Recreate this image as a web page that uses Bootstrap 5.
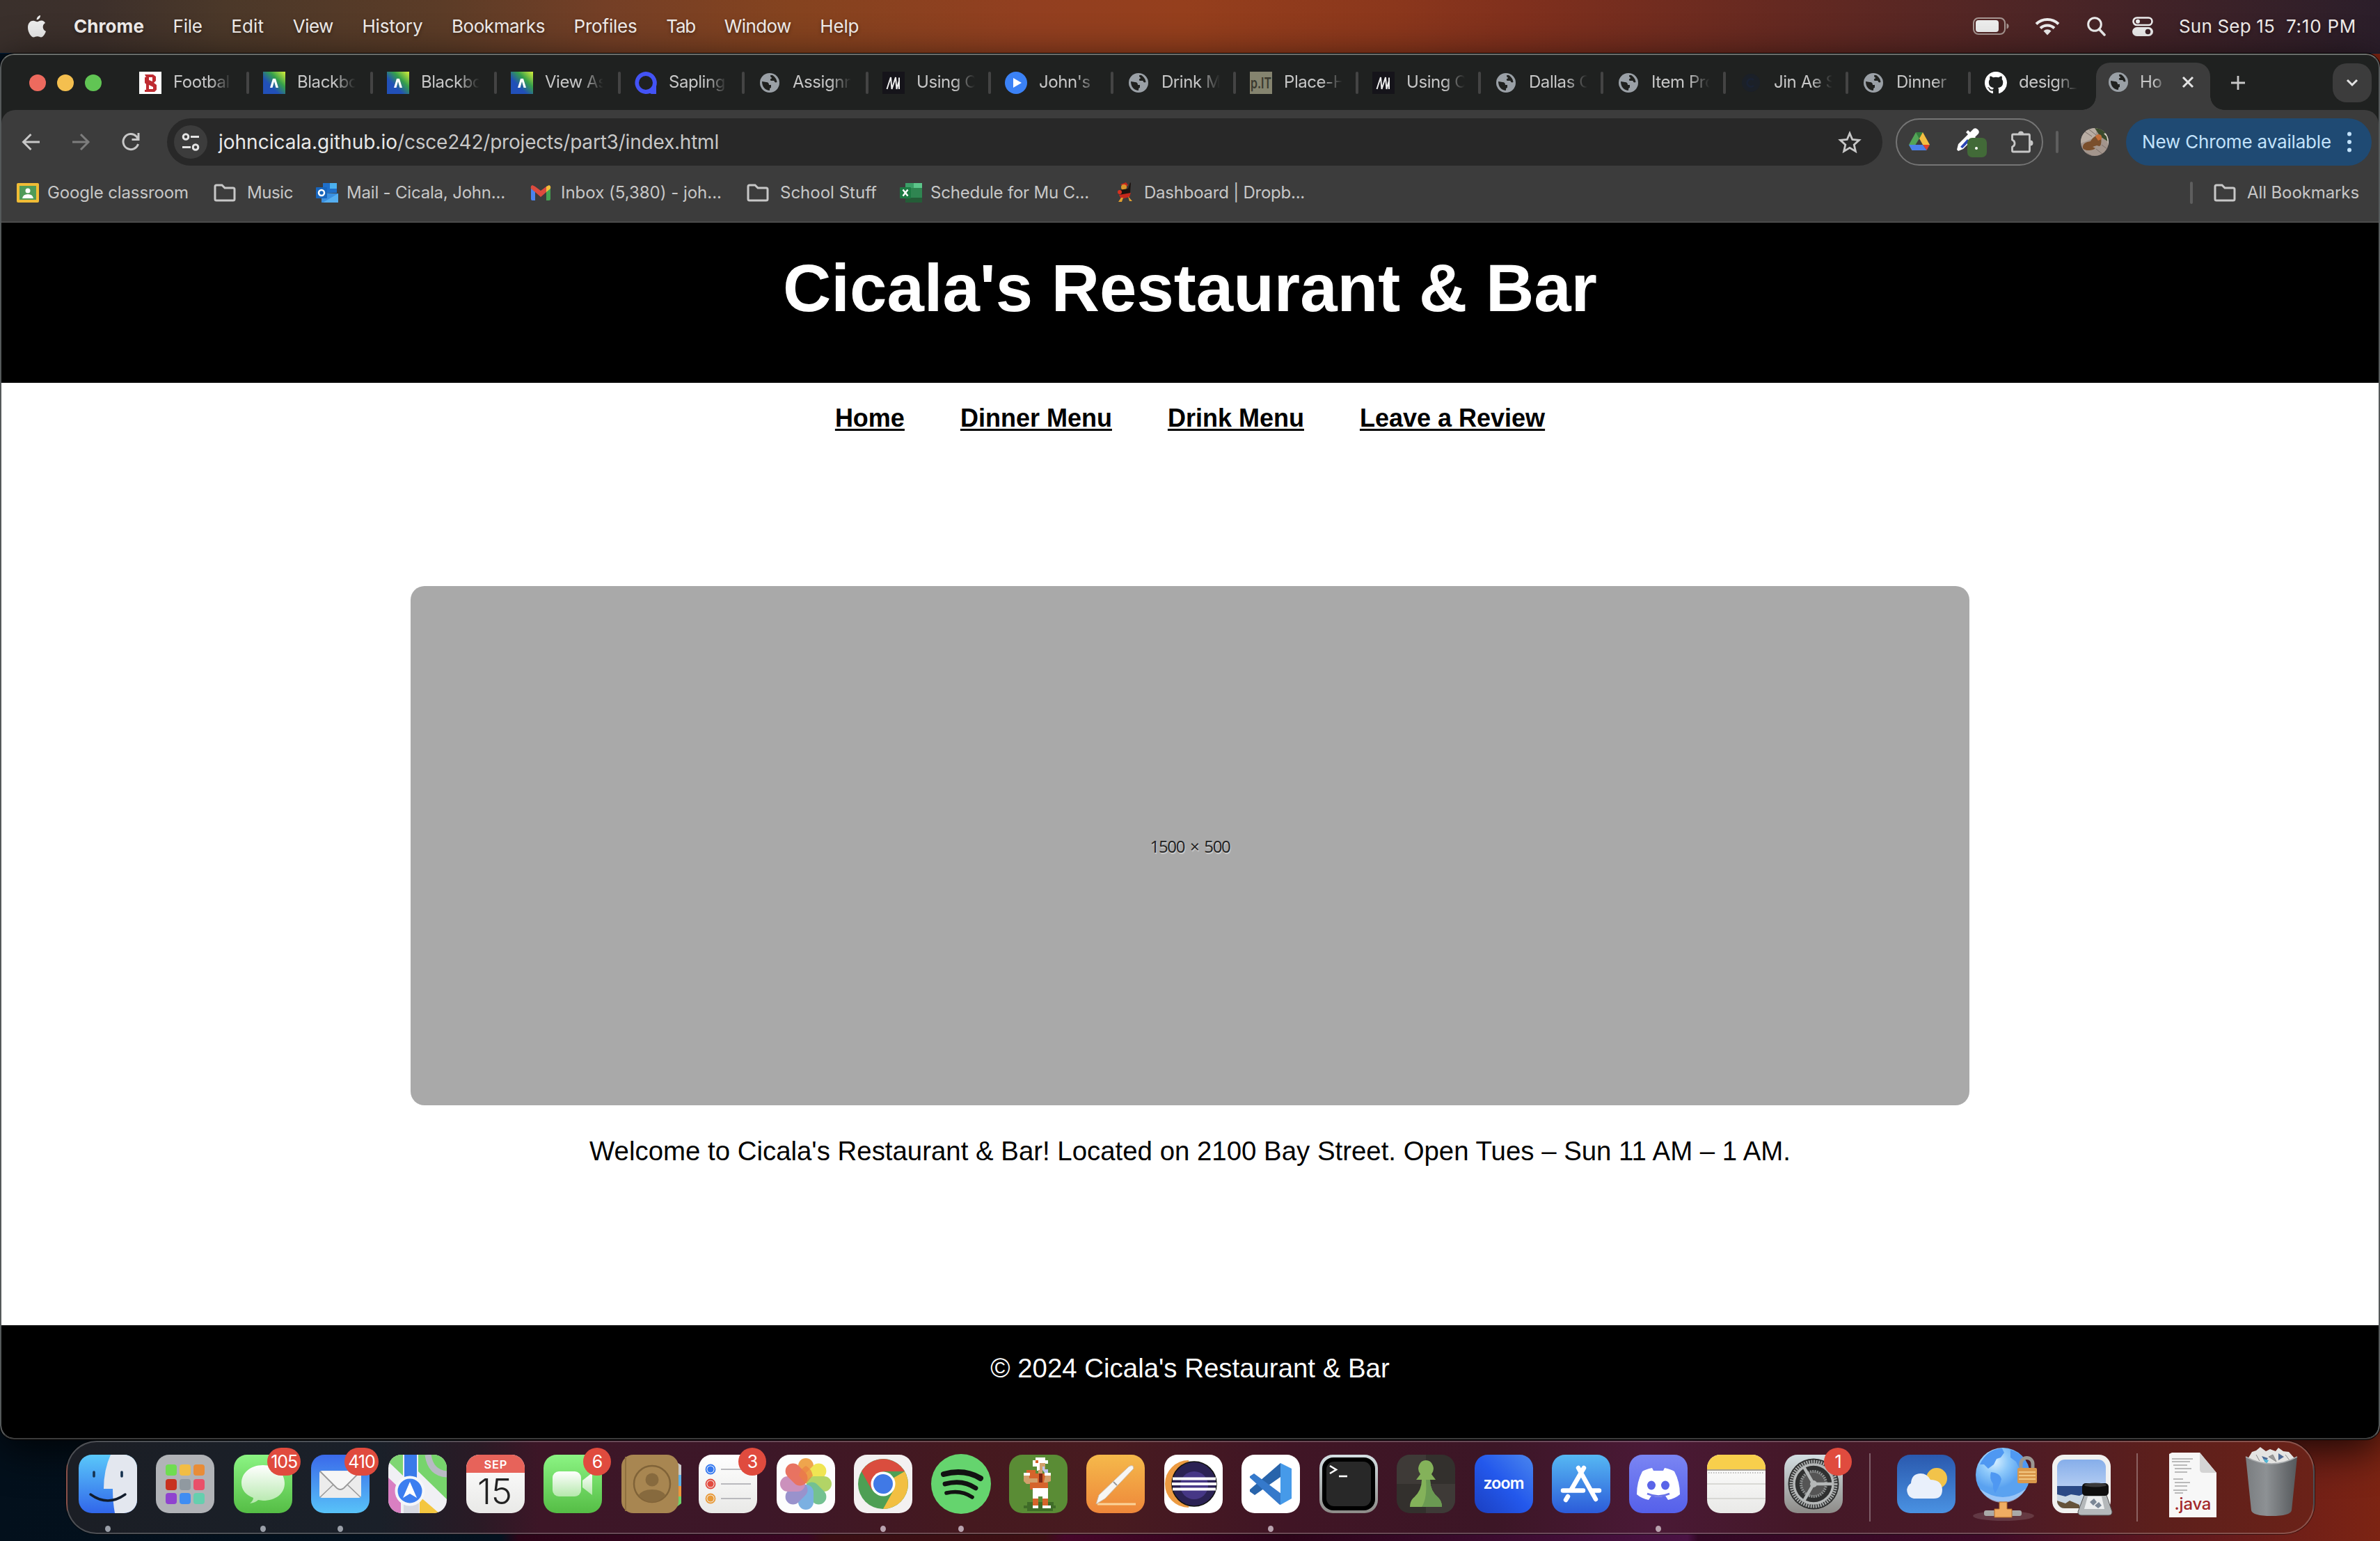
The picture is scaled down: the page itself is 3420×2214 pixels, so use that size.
<!DOCTYPE html>
<html lang="en">
<head>
<meta charset="utf-8">
<title>Home</title>
<link href="https://cdn.jsdelivr.net/npm/bootstrap@5.3.0/dist/css/bootstrap.min.css" rel="stylesheet">
<style>
html,body{height:2214px;width:3420px;overflow:hidden}
body{font-family:Inter,"Liberation Sans",sans-serif;line-height:1;color:#c7c7c7;
 background:linear-gradient(90deg,#03101c 0,#04121f 720px,#2c0418 745px,#3a0724 1160px,#3a0f14 1185px,#3c1014 1500px,#46062a 1530px,#2c0419 1850px,#4a1244 2425px,#330825 2440px,#3d0a28 2850px,#5a1620 3080px,#7c2413 3420px)}
svg{display:block;flex:none}
[data-w]{display:inline-block;white-space:nowrap}
.menubar{height:76px;flex:none;padding:0 34px 1px 40px;background:linear-gradient(90deg,#3a302c 0,#3d302b 140px,#4b3829 320px,#5c3c27 640px,#743f26 870px,#85431f 1140px,#923f20 1480px,#953f1d 1700px,#8b371c 2000px,#80301d 2180px,#652921 2560px,#4c2526 2940px,#2b1e2a 3420px);color:#f2eeec;font-size:26px;text-shadow:0 2px 5px #0006}
.menus{gap:41.6px;margin-left:40px}
.wifi{margin-left:37px}
.lens{margin-left:39px}
.switches{margin-left:38px}
.clock{width:255px;margin-left:37px}
.hairline{height:1px;flex:none;background:linear-gradient(90deg,#03203d 779px,#c07b2b 780px,#b9742b 1100px,#a3441c 1800px,#842c1c 2600px,#0c2038 2900px)}
.win{height:1991px;flex:none;border:2px solid #55595a;border-top-color:#6b6e6b;border-bottom-color:#3b3b3b;border-radius:20px;background:#1f2120;outline:1px solid #000;overflow:hidden;box-shadow:0 14px 60px #000c}
.tabstrip{height:79px;flex:none;font-size:24px;padding-left:40px}
.lightdot{width:24px;height:24px;border-radius:50%}
.tabs{margin-left:34px;height:79px}
.tb{width:176px;padding-left:20px;height:79px;position:relative}
.tb.wd{width:178px}
.tb::after{content:"";position:absolute;right:0;top:24px;width:4px;height:32px;border-radius:2px;background:#444}
.tb.nosep::after{display:none}
.tb svg{width:32px;height:32px}
.tname{width:84px;margin-left:17px;white-space:nowrap;line-height:34px;padding-bottom:1px;letter-spacing:-.45px;-webkit-mask-image:linear-gradient(90deg,#000 54px,#0000 84px);mask-image:linear-gradient(90deg,#000 54px,#0000 84px)}
.tb.active{width:164px;height:68px;margin-top:11px;margin-left:4px;background:#3c3c3c;border-radius:20px 20px 0 0;padding-left:16px;padding-bottom:12px}
.tb.active::after{display:block;background:radial-gradient(circle at 100% 0,#0000 19.5px,#3c3c3c 20px);width:20px;height:20px;right:-20px;top:48px;border-radius:0}
.tb.active::before{content:"";position:absolute;left:-20px;top:48px;width:20px;height:20px;background:radial-gradient(circle at 0 0,#0000 19.5px,#3c3c3c 20px)}
.tb.active .tname{width:36px;margin-left:15px;-webkit-mask-image:linear-gradient(90deg,#000 20px,#0000 38px);mask-image:linear-gradient(90deg,#000 20px,#0000 38px)}
.tb.active .closer{width:18px;height:18px;margin-left:24px}
.plus{margin-left:29px}
.chev{width:56px;height:56px;border-radius:20px;background:#3c3c3c;margin-right:10px}
.toolbar{height:91px;flex:none;background:#3c3c3c;border-radius:20px 20px 0 0;padding:1px 10px 0 28px}
.navgap{margin-left:44px}
.omni{width:2465px;height:68px;border-radius:34px;background:#282828;margin-left:38px;padding:0 30px 0 10px;font-size:28px}
.site{width:48px;height:48px;border-radius:50%;background:#3c3c3c;margin-right:16px}
.host{color:#e8e8e8}
.exts{width:212px;height:68px;border:2px solid #757575;border-radius:34px;margin-left:19px;padding:0 12px 0 17px}
.dropper{margin-left:4px}
.vsep{width:4px;height:32px;border-radius:2px;background:#5e5e5e}
.exts + .vsep{margin:0 32px 0 18px}
.newc{width:353px;height:68px;border-radius:34px;background:#1f4a73;color:#c2e2fb;font-size:26px;padding:0 29px 0 23px;margin-left:25px}
.bmbar{height:71px;flex:none;background:#3c3c3c;border-bottom:2px solid #4b4b4b;padding:0 28px 13px 22px;font-size:24px}
.g12{gap:12px}.g14{gap:14px}.g16{gap:16px}
.m30{margin-left:30px}.m33{margin-left:33px}.m36{margin-left:36px}.m41{margin-left:41px}
.site-page{font-family:Arial,"Liberation Sans",sans-serif;color:#000;min-height:0}
.site-head{height:230px;flex:none}
.site-head h1{font-size:96px;font-weight:700;line-height:112px;margin:0;padding-top:38px}
.site-nav{gap:80px;font-size:36px;font-weight:700;padding-top:30px;line-height:42px;height:292px;flex:none}
.site-nav a{color:#000;text-decoration:underline;text-decoration-thickness:3px;text-underline-offset:3px}
.hero{width:2240px;height:746px;border-radius:20px;background:#a9a9a9;font:24px "Open Sans","Noto Sans",sans-serif;word-spacing:3px;color:#222;text-shadow:1px 2px 1px #cfcfcf;flex:none}
.welcome{font-size:38.4px;line-height:44px;height:316px;padding-top:44px;flex:none}
.site-foot{font-size:38.4px;line-height:44px;padding-top:40px;flex:1 0 160px}
.dock{width:3231px;height:134px;margin:2px 0 0 95px;flex:none;border:2px solid #ffffff38;border-radius:44px;box-shadow:0 0 0 1px #0007;padding-left:2px;
 background:linear-gradient(90deg,#1b1e25 0,#1a2029 450px,#2a1a25 590px,#3d1627 680px,#3d1728 1000px,#45191f 1300px,#481b20 1500px,#401525 1750px,#3c1626 2050px,#4a1936 2270px,#441827 2500px,#4a1a28 2750px,#5c1f1c 3000px,#6b2218 3231px)}
.slot{width:111.45px;height:130px;flex:none;position:relative;padding-top:18px}
.slot svg{width:84px;height:84px;margin:0 auto;overflow:visible}
.slot.run::after{content:"";position:absolute;left:calc(50% - 4px);bottom:1px;width:8px;height:9px;border-radius:50%;background:#b8a2ae}
.slot.cool::after{background:#9a9fa8}
.cnt{position:absolute;right:1px;top:8px;height:40px;min-width:40px;padding:0 5px;border-radius:20px;background:#e04b3e;color:#fff;font-size:25px;line-height:40px;text-align:center;letter-spacing:-1px}
.dsep{width:2px;height:98px;background:#ffffff4d;margin:16px 24px 0;flex:none}
</style>
<script src="https://cdn.jsdelivr.net/npm/bootstrap@5.3.0/dist/js/bootstrap.bundle.min.js"></script>
</head>
<body class="d-flex flex-column m-0">
<svg width="0" height="0" class="position-absolute">
<defs>
<symbol id="globe" viewBox="0 0 32 32"><circle cx="16" cy="16" r="14" fill="#9aa0a6"/><path d="M17 5h3c3 2 6 5 6.500 10-2 1-4 0-4-2h-4c-2 0-2-2-1-3 2 0 2-2 0-2zM5 14l6 1c3 0 4 2 4 4h3v4c-2 0-2 2-2 4C10 27 5 22 5 14z" fill="#20211f"/></symbol>
<symbol id="bb" viewBox="0 0 32 32"><rect width="32" height="32" fill="url(#gbb)"/><path d="M10 23l4-13h4l4 13h-3.500L16 14l-2.500 9z" fill="#fff"/></symbol>
<symbol id="mm" viewBox="0 0 32 32"><rect width="32" height="32" fill="#15141a"/><path d="M6.500 25l5.500-17 1.500 17L19 8l1.500 17L24 13V8.500V25" fill="none" stroke="#eee" stroke-width="2" stroke-linejoin="bevel"/></symbol>
<symbol id="folder" viewBox="0 0 32 28"><path d="M2 5a2 2 0 012-2h8l4 4h12a2 2 0 012 2v14a2 2 0 01-2 2H4a2 2 0 01-2-2z" fill="none" stroke="#c7c7c7" stroke-width="3"/></symbol>
<linearGradient id="gbb" x1="0" y1="1" x2="1" y2="0"><stop offset=".35" stop-color="#2150b8"/><stop offset=".65" stop-color="#36a04a"/><stop offset="1" stop-color="#d8f03a"/></linearGradient>
<linearGradient id="gblue" x2="0" y2="1"><stop stop-color="#5ac8fa"/><stop offset="1" stop-color="#3166ea"/></linearGradient>
<linearGradient id="gmail" x2="0" y2="1"><stop stop-color="#3a69ea"/><stop offset="1" stop-color="#58c3f8"/></linearGradient>
<linearGradient id="ggreen" x2="0" y2="1"><stop stop-color="#8bf483"/><stop offset="1" stop-color="#55bd45"/></linearGradient>
<linearGradient id="gwhite" x2="0" y2="1"><stop stop-color="#fff"/><stop offset="1" stop-color="#e9e9e7"/></linearGradient>
<linearGradient id="gbub" x2="0" y2="1"><stop stop-color="#fff"/><stop offset="1" stop-color="#b5e8ac"/></linearGradient>
<linearGradient id="ggray" x2="0" y2="1"><stop stop-color="#d4dfe3"/><stop offset="1" stop-color="#8d8b88"/></linearGradient>
<linearGradient id="gor" x2="0" y2="1"><stop stop-color="#f5b94b"/><stop offset="1" stop-color="#ee873a"/></linearGradient>
<linearGradient id="gas" x2="0" y2="1"><stop stop-color="#56b8f3"/><stop offset="1" stop-color="#2c5bd9"/></linearGradient>
<linearGradient id="gwx" x2="0" y2="1"><stop stop-color="#2a59ae"/><stop offset="1" stop-color="#4a92e2"/></linearGradient>
<linearGradient id="gdc" x2="0" y2="1"><stop stop-color="#7a85f3"/><stop offset="1" stop-color="#5560ea"/></linearGradient>
<linearGradient id="gsky" x2="0" y2="1"><stop stop-color="#86aeea"/><stop offset="1" stop-color="#b4cdf2"/></linearGradient>
<linearGradient id="gzm" x1="0" y1="1" x2="1" y2="0"><stop stop-color="#1b3fc0"/><stop offset=".5" stop-color="#2358ec"/><stop offset="1" stop-color="#4a86ee"/></linearGradient>
<linearGradient id="gtr"><stop stop-color="#7a7d80"/><stop offset=".4" stop-color="#8d9194"/><stop offset="1" stop-color="#55585b"/></linearGradient>
<radialGradient id="gearth" cx=".35" cy=".25"><stop stop-color="#d8efff"/><stop offset=".5" stop-color="#8cc8fa"/><stop offset="1" stop-color="#5aa2f0"/></radialGradient>
<clipPath id="sq"><rect width="84" height="84" rx="19"/></clipPath>
<clipPath id="pic"><rect x="7" y="7" width="70" height="70" rx="11"/></clipPath>
<clipPath id="av"><circle cx="20" cy="20" r="20"/></clipPath>
</defs>
</svg>

<header class="menubar d-flex align-items-center">
 <svg width="26" height="32" viewBox="0 0 26 32" fill="#ececec"><path d="M18 0c.3 3-2.400 6.500-5.300 6.500C12.300 3.600 15.200.5 18 0zM25 11c-5 3-4 10 1 12-1.500 4-4 8.500-7 8.500-2 0-2.800-1.200-5.300-1.200S10 31.500 8.300 31.500C4.500 31.500 0 24 0 17.500 0 11 4 7.800 7.800 7.800c2.300 0 4 1.500 5.700 1.500 1.600 0 3.300-1.700 6.300-1.700 2 0 4 1.200 5.200 3.400z"/></svg>
 <nav class="menus d-flex align-items-center">
  <b data-w="101">Chrome</b><span data-w="42">File</span><span data-w="47">Edit</span><span data-w="58">View</span><span data-w="87">History</span><span data-w="134">Bookmarks</span><span data-w="91">Profiles</span><span data-w="42">Tab</span><span data-w="96">Window</span><span data-w="56">Help</span>
 </nav>
 <div class="d-flex align-items-center ms-auto">
  <svg width="52" height="26" viewBox="0 0 52 26"><rect x="1" y="1" width="45" height="23" rx="7" fill="none" stroke="#a89793" stroke-width="2"/><rect x="4" y="4" width="33" height="17" rx="4" fill="#eee"/><path d="M48.500 8.500q3 1 3 4t-3 4z" fill="#a89793"/></svg>
  <svg class="wifi" width="36" height="26" viewBox="0 0 36 26" fill="none" stroke="#eee" stroke-width="4"><path d="M2 9.500a23 23 0 0132 0M8 15.500a14.500 14.500 0 0120 0"/><path d="M18 25.500l-5.500-6a8 8 0 0111 0z" fill="#eee" stroke="none"/></svg>
  <svg class="lens" width="27" height="28" viewBox="0 0 27 28" fill="none" stroke="#eee" stroke-width="3"><circle cx="11" cy="11" r="9.300"/><path d="M17.500 18l7.500 8" stroke-width="3.600" stroke-linecap="round"/></svg>
  <svg class="switches" width="30" height="28" viewBox="0 0 30 28"><rect x="1.500" y="1.500" width="27" height="10.500" rx="5.250" fill="none" stroke="#eee" stroke-width="2.600"/><circle cx="8" cy="6.800" r="3" fill="#eee"/><rect y="15" width="30" height="13" rx="6.500" fill="#eee"/><circle cx="22.500" cy="21.500" r="3.800" fill="#3c2228"/></svg>
  <span class="clock d-flex justify-content-between"><span data-w="138">Sun Sep 15</span><span data-w="101">7:10 PM</span></span>
 </div>
</header>
<div class="hairline"></div>

<main class="win d-flex flex-column">
 <div class="tabstrip d-flex align-items-center">
  <div class="d-flex g16"><i class="lightdot" style="background:#ed6a5e"></i><i class="lightdot" style="background:#f4bf4f"></i><i class="lightdot" style="background:#61c554"></i></div>
  <div class="tabs d-flex align-items-center">
   <div class="tb wd d-flex align-items-center"><svg viewBox="0 0 32 32"><rect width="32" height="32" fill="#fff"/><path d="M8 4h12l4 3v6l-3 3 4 3v7l-3 3H8v-3h2V18l-2-2V8h2zm6 4v4l5 2V8zm0 11v6h6v-3z" fill="#bf2c32" fill-rule="evenodd"/></svg><span class="tname">Footbal</span></div>
   <div class="tb wd d-flex align-items-center"><svg><use href="#bb"/></svg><span class="tname">Blackbo</span></div>
   <div class="tb wd d-flex align-items-center"><svg><use href="#bb"/></svg><span class="tname">Blackbo</span></div>
   <div class="tb wd d-flex align-items-center"><svg><use href="#bb"/></svg><span class="tname">View As</span></div>
   <div class="tb wd d-flex align-items-center"><svg viewBox="0 0 32 32"><path d="M16 0a16 16 0 0115 21v11H24l-2-1A16 16 0 1116 0zm0 6a10 10 0 100 20 10 10 0 000-20z" fill="#4353f5" fill-rule="evenodd"/></svg><span class="tname">Sapling</span></div>
   <div class="tb wd d-flex align-items-center"><svg><use href="#globe"/></svg><span class="tname">Assignn</span></div>
   <div class="tb d-flex align-items-center"><svg><use href="#mm"/></svg><span class="tname">Using C</span></div>
   <div class="tb d-flex align-items-center"><svg viewBox="0 0 32 32"><circle cx="16" cy="16" r="16" fill="#3b82f6"/><path d="M12 9l12 7-12 7z" fill="#fff"/></svg><span class="tname">John's</span></div>
   <div class="tb d-flex align-items-center"><svg><use href="#globe"/></svg><span class="tname">Drink M</span></div>
   <div class="tb d-flex align-items-center"><svg viewBox="0 0 32 32"><rect width="32" height="32" fill="#85846f"/><text x="1" y="24" font-size="22" font-weight="600" textLength="30" lengthAdjust="spacingAndGlyphs" fill="#3a392e">p.IT</text></svg><span class="tname">Place-H</span></div>
   <div class="tb d-flex align-items-center"><svg><use href="#mm"/></svg><span class="tname">Using C</span></div>
   <div class="tb d-flex align-items-center"><svg><use href="#globe"/></svg><span class="tname">Dallas C</span></div>
   <div class="tb d-flex align-items-center"><svg><use href="#globe"/></svg><span class="tname">Item Pro</span></div>
   <div class="tb d-flex align-items-center"><svg viewBox="0 0 32 32"><circle cx="16" cy="16" r="13" fill="#1b2028"/><path d="M20 12a5.500 5.500 0 100 8" fill="none" stroke="#1a2233" stroke-width="3"/></svg><span class="tname">Jin Ae S</span></div>
   <div class="tb d-flex align-items-center"><svg><use href="#globe"/></svg><span class="tname">Dinner</span></div>
   <div class="tb nosep d-flex align-items-center"><svg viewBox="0 0 16 16"><path fill="#fff" d="M8 0C3.580 0 0 3.580 0 8c0 3.540 2.290 6.530 5.470 7.590.4.070.55-.17.55-.38 0-.19-.010-.82-.010-1.490-2.010.37-2.530-.49-2.690-.94-.090-.23-.48-.94-.82-1.130-.28-.15-.68-.52-.010-.53.63-.010 1.080.58 1.230.82.72 1.210 1.870.87 2.330.66.070-.52.28-.87.510-1.070-1.780-.2-3.640-.89-3.640-3.950 0-.87.310-1.590.82-2.150-.080-.2-.36-1.020.080-2.120 0 0 .67-.21 2.200.82a7.600 7.600 0 014 0c1.530-1.040 2.200-.82 2.200-.82.44 1.100.16 1.920.080 2.120.51.56.82 1.270.82 2.150 0 3.070-1.870 3.750-3.650 3.950.29.25.54.73.54 1.480 0 1.070-.010 1.930-.010 2.200 0 .21.15.46.55.38A8 8 0 0016 8c0-4.420-3.580-8-8-8z"/></svg><span class="tname">design_</span></div>
   <div class="tb active d-flex align-items-center"><svg><use href="#globe"/></svg><span class="tname">Ho</span><svg class="closer" viewBox="0 0 18 18"><path d="M2 2l14 14M16 2L2 16" stroke="#e3e3e3" stroke-width="3"/></svg></div>
  </div>
  <svg class="plus" width="22" height="22" viewBox="0 0 22 22"><path d="M11 1v20M1 11h20" stroke="#c7c7c7" stroke-width="2.800"/></svg>
  <div class="chev ms-auto d-flex align-items-center justify-content-center"><svg width="18" height="12" viewBox="0 0 18 12"><path d="M2 2l7 7 7-7" fill="none" stroke="#e3e3e3" stroke-width="3"/></svg></div>
 </div>
 <div class="toolbar d-flex align-items-center">
  <svg width="28" height="28" viewBox="0 0 28 28" fill="none" stroke="#c7c7c7" stroke-width="3"><path d="M27 14H4M14.500 3L3.500 14l11 11"/></svg>
  <svg class="navgap" width="28" height="28" viewBox="0 0 28 28" fill="none" stroke="#7d7d7d" stroke-width="3"><path d="M2 14h22M14 3l11 11-11 11"/></svg>
  <svg class="navgap" width="28" height="28" viewBox="0 0 28 28" fill="none" stroke="#c7c7c7" stroke-width="3"><path d="M24.500 17A11 11 0 1122 6l3 4M25 1v9.500h-9.500"/></svg>
  <div class="omni d-flex align-items-center">
   <span class="site d-flex align-items-center justify-content-center"><svg width="26" height="26" viewBox="0 0 26 26" fill="none" stroke="#e3e3e3" stroke-width="3"><circle cx="6" cy="5.500" r="3.800"/><path d="M13 5.500h12M1 20.500h12"/><circle cx="20" cy="20.500" r="3.800"/></svg></span>
   <span class="host" data-w="257">johncicala.github.io</span><span data-w="462">/csce242/projects/part3/index.html</span>
   <svg class="ms-auto" width="34" height="32" viewBox="0 0 34 32"><path d="M17 3.500l3.800 9 9.700.9-7.300 6.500 2.200 9.500-8.400-5-8.400 5 2.200-9.500-7.300-6.500 9.700-.9z" fill="none" stroke="#c7c7c7" stroke-width="2.800"/></svg>
  </div>
  <div class="exts d-flex align-items-center justify-content-between">
   <svg width="30" height="28" viewBox="0 0 30 28"><path d="M10 0h10l-5 9z" fill="#34803c"/><path d="M10 0L0 18l4.500 8L15 9z" fill="#53a557"/><path d="M20 0l10 18H20L15 9z" fill="#f3bf42"/><path d="M30 18l-4.500 8L20 18z" fill="#e0402f"/><path d="M0 18h20l5.500 8h-21z" fill="#4b80ea"/></svg>
   <svg class="dropper" width="44" height="44" viewBox="0 0 44 44"><path d="M1 33l2-8 14-14-3-3 3-3 3 3 5-5q3-2 6 1t1 6l-5 5 3 3-3 3-3-3L10 32l-7 3z" fill="#fff"/><path d="M6 29l10-11 3 3-10 10z" fill="#2a44b5"/><rect x="16" y="16" width="28" height="28" rx="7" fill="#426a38"/><circle cx="29" cy="31" r="2" fill="#fff"/></svg>
   <svg width="34" height="34" viewBox="0 0 34 34"><path d="M5 6h22q1.500 0 1.500 1.500v22q0 1.500-1.500 1.500H5q-1.500 0-1.500-1.500V24a5.300 5.300 0 000-10V7.500Q3.500 6 5 6z" fill="none" stroke="#c7c7c7" stroke-width="2.800" stroke-linejoin="round"/><path d="M12 5.500a4 4 0 018 0zM29.500 14.500a4 4 0 010 8z" fill="#c7c7c7"/></svg>
  </div>
  <span class="vsep"></span>
  <svg width="40" height="40" viewBox="0 0 40 40"><g clip-path="url(#av)"><rect width="40" height="40" fill="#a3958c"/><path d="M0 0h24l-4 14-20 8z" fill="#b9ada3"/><path d="M20 0h20v20l-12-8z" fill="#3a4a2c"/><path d="M33 8l4 4 3 14V6z" fill="#ddd5cc"/><path d="M8 36l8 4M22 30l10 8M30 24l8 6M4 4l12 8M12 2l10 8" stroke="#7b6e69"/><path d="M3 29c-1-7 5-9 11-10 3-5 6-8 11-8 5 2 5 7 4 12-1 4-3 3-6 2l-6 2 4 2c-3 3-14 5-18 0z" fill="#7a4f2c"/><path d="M21 12c2-4 8-4 9 0v4l-5 2z" fill="#c36e38"/></g></svg>
  <div class="newc d-flex align-items-center justify-content-between"><span data-w="272">New Chrome available</span><svg width="6" height="30" viewBox="0 0 6 30" fill="#c2e2fb"><circle cx="3" cy="3.500" r="3"/><circle cx="3" cy="15" r="3"/><circle cx="3" cy="26.500" r="3"/></svg></div>
 </div>
 <div class="bmbar d-flex align-items-center">
  <div class="d-flex align-items-center g12"><svg width="32" height="28" viewBox="0 0 32 28"><rect width="32" height="28" rx="2" fill="#f0bc35"/><rect x="4" y="4" width="24" height="20" fill="#4f9b58"/><circle cx="16" cy="11" r="3.500" fill="#fff"/><path d="M8 22q1-6 8-6t8 6z" fill="#fff"/></svg><span data-w="203">Google classroom</span></div>
  <div class="d-flex align-items-center g16 m36"><svg width="32" height="28"><use href="#folder"/></svg><span data-w="66">Music</span></div>
  <div class="d-flex align-items-center g12 m33"><svg width="32" height="28" viewBox="0 0 32 28"><path d="M10 0h20v14H10z" fill="#1f6fc9"/><path d="M20 0h10v8H20z" fill="#4bb0ee"/><path d="M8 14l24 1v13H8z" fill="#3a8fe0"/><path d="M10 28l22-13v13z" fill="#55aef0"/><rect y="6" width="16" height="16" rx="1" fill="#1866bd"/><circle cx="8" cy="14" r="4" fill="none" stroke="#fff" stroke-width="2.500"/></svg><span data-w="228">Mail - Cicala, John...</span></div>
  <div class="d-flex align-items-center g14 m36"><svg width="30" height="22" viewBox="0 0 30 22"><path d="M1 3v17q0 2 2 2h4V8z" fill="#4a83ee"/><path d="M29 3v17q0 2-2 2h-4V8z" fill="#45a352"/><path d="M23 2l4-2q3 1 2 5l-6 5z" fill="#f3bd3b"/><path d="M1 5q-1-4 2-5l4 2 8 6 8-6v8l-8 7-8-7z" fill="#dd4b3e"/></svg><span data-w="231">Inbox (5,380) - joh...</span></div>
  <div class="d-flex align-items-center g16 m36"><svg width="32" height="28"><use href="#folder"/></svg><span data-w="139">School Stuff</span></div>
  <div class="d-flex align-items-center g12 m33"><svg width="32" height="28" viewBox="0 0 32 28"><path d="M8 0h24v28H8z" fill="#2f8551"/><path d="M20 0h12v7H20z" fill="#5cc58a"/><path d="M8 0h12v7H8z" fill="#3c9f68"/><path d="M8 21h24v7H8z" fill="#245c37"/><rect y="6" width="16" height="16" rx="1" fill="#1d7a43"/><path d="M4.500 9.500l7 9M11.500 9.500l-7 9" stroke="#fff" stroke-width="2.400"/></svg><span data-w="228">Schedule for Mu C...</span></div>
  <div class="d-flex align-items-center g16 m41"><svg width="22" height="30" viewBox="0 0 22 30"><path d="M4 3l8-3 3 4-3 3z" fill="#c4281c"/><circle cx="9" cy="7" r="4" fill="#d9952c"/><path d="M3 11l12-2 3-9 1 1-1 14-4 5-9 1z" fill="#1c1411"/><path d="M2 18l17-3-2 6-12 3z" fill="#c4281c"/><path d="M5 22l3 0-2 6H1zM15 20l2 7h4" fill="#e0a030"/><circle cx="3" cy="14" r="3" fill="#d8301f"/></svg><span data-w="231">Dashboard | Dropb...</span></div>
  <span class="vsep ms-auto"></span>
  <div class="d-flex align-items-center g16 m30"><svg width="32" height="28"><use href="#folder"/></svg><span data-w="161">All Bookmarks</span></div>
 </div>

 <div class="site-page bg-white d-flex flex-column align-items-center flex-grow-1">
  <div class="site-head bg-black text-white text-center w-100"><h1>Cicala's Restaurant &amp; Bar</h1></div>
  <nav class="site-nav d-flex justify-content-center"><a href="#">Home</a><a href="#">Dinner Menu</a><a href="#">Drink Menu</a><a href="#">Leave a Review</a></nav>
  <div class="hero d-flex align-items-center justify-content-center"><span data-w="115">1500 × 500</span></div>
  <p class="welcome m-0">Welcome to Cicala's Restaurant &amp; Bar! Located on 2100 Bay Street. Open Tues – Sun 11 AM – 1 AM.</p>
  <footer class="site-foot bg-black text-white text-center w-100">© 2024 Cicala's Restaurant &amp; Bar</footer>
 </div>
</main>

<div class="dock d-flex">
 <div class="slot run cool"><svg viewBox="0 0 84 84"><g clip-path="url(#sq)"><path d="M0 0h84v84H0z" fill="url(#gblue)"/><path d="M46 0h38v84H52q-3-16-3-35H36Q36 22 46 0z" fill="#e3e7ef"/></g><path d="M22 25v6M62 25v6" stroke="#16324f" stroke-width="3.600" stroke-linecap="round"/><path d="M17 57q25 18 50 0" fill="none" stroke="#111c2c" stroke-width="3.400" stroke-linecap="round"/></svg></div>
 <div class="slot"><svg viewBox="0 0 84 84"><rect width="84" height="84" rx="19" fill="#b1b3b7"/><g><rect x="14" y="14" width="16" height="16" rx="4" fill="#6fdd51"/><rect x="34" y="14" width="16" height="16" rx="4" fill="#f2bd45"/><rect x="54" y="14" width="16" height="16" rx="4" fill="#e88c38"/><rect x="14" y="35" width="16" height="16" rx="4" fill="#c8321f"/><rect x="34" y="35" width="16" height="16" rx="4" fill="#9099a0"/><rect x="54" y="35" width="16" height="16" rx="4" fill="#e9506a"/><rect x="14" y="55" width="16" height="16" rx="4" fill="#8f43cf"/><rect x="34" y="55" width="16" height="16" rx="4" fill="#3f8df2"/><rect x="54" y="55" width="16" height="16" rx="4" fill="#65cfae"/></g></svg></div>
 <div class="slot run cool"><svg viewBox="0 0 84 84"><rect width="84" height="84" rx="19" fill="url(#ggreen)"/><path d="M42 15c18 0 31 11 31 26S60 66 42 66l-7-1q-4 4-12 5 5-4 5-8C17 58 11 50 11 41c0-15 13-26 31-26z" fill="url(#gbub)"/></svg><span class="cnt">105</span></div>
 <div class="slot run cool"><svg viewBox="0 0 84 84"><rect width="84" height="84" rx="19" fill="url(#gmail)"/><rect x="12" y="23" width="60" height="39" rx="4" fill="#ececec"/><path d="M13 61l20-19M71 61L51 42" stroke="#999" stroke-width="1.500"/><path d="M13 24l24 24q5 4 10 0l24-24" fill="#f6f6f6" stroke="#999" stroke-width="1.800"/></svg><span class="cnt">410</span></div>
 <div class="slot"><svg viewBox="0 0 84 84"><g clip-path="url(#sq)"><path d="M0 0h84v84H0z" fill="#f0f0f4"/><path d="M0 0h21v30L0 10z" fill="#7fd673"/><path d="M43 0h41v64L43 24z" fill="#77d46c"/><path d="M0 33l18 17v34H0z" fill="#d97fc2"/><path d="M45 84V60l28 24z" fill="#f4c63f"/><path d="M23 0h18v50H23z" fill="#3a7ae9"/><path d="M57 0q4 28 30 28" fill="none" stroke="#b8bac4" stroke-width="9"/><path d="M22 50h22v34H22z" fill="#d7d9e2"/></g><circle cx="31" cy="52" r="19.500" fill="#3c7ef0" stroke="#f4f6fa" stroke-width="4"/><path d="M31 39l10 23-10-6-10 6z" fill="#fff"/></svg></div>
 <div class="slot"><svg viewBox="0 0 84 84"><rect width="84" height="84" rx="19" fill="url(#gwhite)"/><path d="M0 26V19A19 19 0 0119 0h46a19 19 0 0119 19v7z" fill="#e7635a"/><text x="42" y="19.500" font-size="16.500" font-weight="600" fill="#fff" text-anchor="middle" textLength="33">SEP</text><text x="41" y="71" font-size="51" font-weight="300" fill="#222" text-anchor="middle" textLength="50">15</text></svg></div>
 <div class="slot"><svg viewBox="0 0 84 84"><rect width="84" height="84" rx="19" fill="url(#ggreen)"/><rect x="13" y="24" width="41" height="36" rx="9" fill="url(#gbub)"/><path d="M56 37l14-11v32L56 47z" fill="url(#gbub)"/></svg><span class="cnt">6</span></div>
 <div class="slot"><svg viewBox="0 0 84 84"><path d="M78 10l8 5v14h-8z" fill="#c9c9c9"/><path d="M80 29h6v16h-6z" fill="#5fb0e6"/><path d="M80 45h6v15h-6z" fill="#ee963c"/><path d="M80 60h6v10l-8 6z" fill="#70d069"/><rect width="82" height="84" rx="17" fill="#a88651"/><path d="M6 3v78" stroke="#8f7040" stroke-width="2"/><circle cx="44" cy="42" r="26" fill="none" stroke="#806338" stroke-width="2.500"/><circle cx="44" cy="36" r="9.500" fill="#876a3e"/><path d="M25 58q5-8 19-8t19 8q-8 10-19 10t-19-10z" fill="#876a3e"/></svg></div>
 <div class="slot"><svg viewBox="0 0 84 84"><rect width="84" height="84" rx="19" fill="url(#gwhite)"/><g fill="none" stroke-width="1.800"><circle cx="17" cy="21" r="6.500" stroke="#3478f0"/><circle cx="17" cy="42" r="6.500" stroke="#e24a3f"/><circle cx="17" cy="63" r="6.500" stroke="#e99a38"/></g><circle cx="17" cy="21" r="4.600" fill="#3478f0"/><circle cx="17" cy="42" r="4.600" fill="#e24a3f"/><circle cx="17" cy="63" r="4.600" fill="#e99a38"/><path d="M32 21h43M32 42h43M32 63h43" stroke="#b9b9bd" stroke-width="1.800"/></svg><span class="cnt">3</span></div>
 <div class="slot"><svg viewBox="0 0 84 84"><rect width="84" height="84" rx="19" fill="#fdfdfd"/><g opacity=".88"><rect x="31" y="5" width="22" height="36" rx="11" fill="#ee9a35"/><rect x="31" y="5" width="22" height="36" rx="11" fill="#efe23c" transform="rotate(45 42 42)"/><rect x="31" y="5" width="22" height="36" rx="11" fill="#a8cf52" transform="rotate(90 42 42)"/><rect x="31" y="5" width="22" height="36" rx="11" fill="#62b983" transform="rotate(135 42 42)"/><rect x="31" y="5" width="22" height="36" rx="11" fill="#6aa6de" transform="rotate(180 42 42)"/><rect x="31" y="5" width="22" height="36" rx="11" fill="#8c84c6" transform="rotate(225 42 42)"/><rect x="31" y="5" width="22" height="36" rx="11" fill="#c583b4" transform="rotate(270 42 42)"/><rect x="31" y="5" width="22" height="36" rx="11" fill="#e6604c" transform="rotate(315 42 42)"/><path d="M42 42l-10-12q2-10 10-14 8 4 10 14z" fill="#e8702a" opacity=".7"/></g></svg></div>
 <div class="slot run"><svg viewBox="0 0 84 84"><rect width="84" height="84" rx="19" fill="#f3f1f1"/><circle cx="42" cy="42" r="36" fill="#4e9f54"/><path d="M42 42l31-18A36 36 0 0142 78l15-27z" fill="#f2bf42"/><path d="M11 24A36 36 0 0173 24H42L26 51z" fill="#da4d3e"/><circle cx="42" cy="42" r="17.500" fill="#fff"/><circle cx="42" cy="42" r="14" fill="#4079e6"/></svg></div>
 <div class="slot run"><svg viewBox="0 0 84 84"><circle cx="42" cy="42" r="43" fill="#65d46e"/><g fill="none" stroke="#121212" stroke-linecap="round"><path d="M17 28q30-8 53 6" stroke-width="8"/><path d="M19 42q25-7 44 6" stroke-width="6.800"/><path d="M21 55q21-5 37 6" stroke-width="5.600"/></g></svg></div>
 <div class="slot"><svg viewBox="0 0 84 84"><rect width="84" height="84" rx="19" fill="#5a8c35"/><path d="M21 73h46v4h-4v4H26v-4h-5zM26 68h38v6H26z" fill="#3f6c28"/><path d="M38 4h14v4h4v5H44v10h-4v-6h-6V8h4z" fill="#fff"/><path d="M38 8h4v4h-4z" fill="#d5642b"/><path d="M44 12h8v10h-4v8h-6v-8h2z" fill="#d2a06b"/><path d="M48 17h3v4h5v5h-5l-3-4z" fill="#bcc6ef"/><path d="M25 22h13v5h14v20H32V34h-7z" fill="#d5642b"/><path d="M21 26h9v4h-9zM51 26h9v4h-9z" fill="#fff"/><path d="M21 30h8v4h12v8H25l-4-4zM52 30h8v8l-6 2h-4z" fill="#d2a06b"/><path d="M43 27h5v16h-5z" fill="#7c2615"/><path d="M30 40h26v10H30z" fill="#d5642b"/><path d="M34 48h22v16h-8v-4h-6v4h-8z" fill="#fff"/><path d="M34 63h8v10h-8zM48 63h8v10h-8z" fill="#d5642b"/><path d="M34 73h8v4h-8zM48 73h12v4H48z" fill="#fff"/></svg></div>
 <div class="slot"><svg viewBox="0 0 84 84"><rect width="84" height="84" rx="19" fill="url(#gor)"/><path d="M16 71h55" stroke="#fbd39a" stroke-width="3"/><path d="M14 71l4-13 43-41q7-4 7 3L27 63z" fill="#f7f6f4" stroke="#c9b9a5" stroke-width="1"/><path d="M39 39l5 5" stroke="#999" stroke-width="2"/></svg></div>
 <div class="slot"><svg viewBox="0 0 84 84"><rect width="84" height="84" rx="19" fill="#fff"/><path d="M35 9a33 33 0 000 66q-20-8-20-33T35 9z" fill="#ec9a41" stroke="#ec9a41" stroke-width="2"/><circle cx="43" cy="42" r="32" fill="#2b2254" stroke="#111" stroke-width="1.500"/><circle cx="43" cy="44" r="20" fill="#463786"/><path d="M12 34.500h62M11 42h64M12 49.500h62" stroke="#fff" stroke-width="4"/></svg></div>
 <div class="slot run"><svg viewBox="0 0 84 84"><rect width="84" height="84" rx="19" fill="#fff"/><path d="M56 12v20L19 58l-7-5v-3z" fill="#2864ab"/><path d="M12 33v-2l6-4 39 29v15l-2 1z" fill="#3579cb"/><path d="M56 12l16 8v43l-16 9z" fill="#469ae9"/></svg></div>
 <div class="slot"><svg viewBox="0 0 84 84"><rect width="84" height="84" rx="19" fill="url(#ggray)"/><rect x="4" y="4" width="76" height="76" rx="16" fill="#000"/><rect x="10" y="10" width="64" height="64" rx="11" fill="#282828"/><path d="M15 16l9 5.500-9 5.500" fill="none" stroke="#fff" stroke-width="2.600"/><path d="M28 31h12" stroke="#fff" stroke-width="2.600"/></svg></div>
 <div class="slot"><svg viewBox="0 0 84 84"><rect width="84" height="84" rx="19" fill="#33302d"/><path d="M0 42V19A19 19 0 0119 0h23v42zM42 42h42v23a19 19 0 01-19 19H42z" fill="#3e3a37"/><path d="M42 8a11 12 0 018 20l6 8h-8q0 16 12 26 5 5 5 13H19q0-8 5-13 12-10 12-26h-8l6-8a11 12 0 018-20z" fill="#84b25a"/><path d="M48 36q0 16 12 26 5 5 5 13H36q8-12 6-39z" fill="#6a9a52"/></svg></div>
 <div class="slot"><svg viewBox="0 0 84 84"><rect width="84" height="84" rx="19" fill="url(#gzm)"/><text x="42" y="48.500" font-size="23" font-weight="600" fill="#fff" text-anchor="middle" textLength="59">zoom</text></svg></div>
 <div class="slot"><svg viewBox="0 0 84 84"><rect width="84" height="84" rx="19" fill="url(#gas)"/><g stroke="#fff" stroke-width="6.500" stroke-linecap="round"><path d="M46 19L28 50M38 19l25 45M16 51.500h29M58 51.500h10M23 60l-3 5"/></g></svg></div>
 <div class="slot run"><svg viewBox="0 0 84 84"><rect width="84" height="84" rx="19" fill="url(#gdc)"/><path d="M33 19q-9 2-14 5-8 15-8 33 7 6 17 8l4-6q10 3 20 0l4 6q10-2 17-8 0-18-8-33-5-3-14-5l-2 4h-14z" fill="#fff"/><ellipse cx="32" cy="44" rx="6" ry="6.500" fill="#5a64e8"/><ellipse cx="52" cy="44" rx="6" ry="6.500" fill="#5a64e8"/><path d="M26 56q16 7 32 0" stroke="#6b74e8" stroke-width="2.500" fill="none"/></svg></div>
 <div class="slot"><svg viewBox="0 0 84 84"><rect width="84" height="84" rx="19" fill="url(#gwhite)"/><path d="M0 21v-2A19 19 0 0119 0h46a19 19 0 0119 19v2z" fill="#f8cf4c"/><path d="M0 22h84" stroke="#a8a293" stroke-width="2"/><path d="M2 26h80" stroke="#aaa" stroke-width="1.500" stroke-dasharray="1.500 2"/><path d="M0 42h84M0 63h84" stroke="#cfcfcc" stroke-width="1.500"/></svg></div>
 <div class="slot"><svg viewBox="0 0 84 84"><rect width="84" height="84" rx="19" fill="url(#ggray)"/><circle cx="42" cy="42" r="36.500" fill="#2f3030"/><circle cx="42" cy="42" r="32" fill="none" stroke="#a9acac" stroke-width="5" stroke-dasharray="2 1.500"/><circle cx="42" cy="42" r="28" fill="none" stroke="#b5b8b8" stroke-width="3.500"/><circle cx="42" cy="42" r="18" fill="#555" stroke="#8d9090" stroke-width="4" stroke-dasharray="2 1.300"/><path d="M42 42h27M42 42L28.500 18.500M42 42L28.500 65.500" stroke="#b5b8b8" stroke-width="4.500"/><circle cx="42" cy="42" r="5" fill="#b5b8b8"/></svg><span class="cnt">1</span></div>
 <span class="dsep"></span>
 <div class="slot"><svg viewBox="0 0 84 84"><rect width="84" height="84" rx="19" fill="url(#gwx)"/><circle cx="57" cy="34" r="15" fill="#f2c34a"/><path d="M24 63a12 12 0 01-4-22q1-14 14-14 9 0 14 9 16 0 17 14 0 13-12 13z" fill="#e9f0fb"/></svg></div>
 <div class="slot"><svg viewBox="0 0 84 84"><ellipse cx="42" cy="88" rx="44" ry="7" fill="#ffffff22"/><circle cx="41" cy="29" r="39" fill="url(#gearth)"/><path d="M8 14Q18-8 40-9l3 6-5 7-6 2-4 8-8 6-6-6zM24 25q13 1 15 10-2 9-9 20-4-6-3-13-6-8-3-17zM52-7q18 5 26 25l-3 12-9-8-6-12-8-6z" fill="#4f98f2"/><path d="M8 49q33 24 66 0-12 20-33 20T8 49z" fill="#c3dcfb" opacity=".6"/><rect x="14" y="80" width="54" height="8" rx="3" fill="#a9aaa8"/><path d="M36 68h11v10h7v12H29V78h7z" fill="#efad62" stroke="#b76c28"/><path d="M67 22V13a8.500 8.500 0 0117 0v9" fill="none" stroke="#9b9893" stroke-width="5"/><rect x="62" y="19" width="28" height="22" rx="2" fill="#d9984b"/><path d="M64 25h24M64 30h24M64 35h24" stroke="#f2c782" stroke-width="2"/></svg></div>
 <div class="slot"><svg viewBox="0 0 84 84"><rect width="84" height="84" rx="17" fill="#f1f1f0"/><g clip-path="url(#pic)"><path d="M7 7h70v40H7z" fill="url(#gsky)"/><path d="M7 45h70v32H7z" fill="#2b4a86"/><path d="M7 57l12 3 8-3 12 2 8-4v22H7z" fill="#cbd9e6"/><path d="M7 66l12 4 6-4 14 6v5H7z" fill="#65533b"/></g><path d="M46 58h32l8 24q0 5-5 5H42q-5 0-5-5z" fill="#b4b8ba" stroke="#555"/><path d="M51 60h20l4 18H46z" fill="#eceeef"/><path d="M54 68l6-5 4 5-5 5zM61 73l6-5 4 5-5 4z" fill="#7b8796"/><rect x="43" y="41" width="38" height="18" rx="5" fill="#0e0e0e"/><ellipse cx="62" cy="43.500" rx="16" ry="3" fill="#3a3a3a"/></svg></div>
 <span class="dsep"></span>
 <div class="slot"><svg viewBox="0 0 84 84"><path d="M11-3h40l24 29v64H7V-1z" fill="#f7f7f7"/><path d="M51-3v24q0 5 5 5h19z" fill="#d4d4d4"/><path d="M11 6h30M11 10h26M13 15h20M15 20h24M15 25h18M13 35h14M15 40h22M15 45h18M13 51h20M15 55h12" stroke="#a7a7a7" stroke-width="1.300"/><text x="41" y="79" font-size="24" font-weight="500" fill="#a3282a" text-anchor="middle" textLength="53">.java</text></svg></div>
 <div class="slot"><svg viewBox="0 0 84 84"><path d="M8 6l6-10 6-2 6-5 8 6 6-3 8 3 4-5 7 5 8 1 9 10-8 12H18z" fill="#e4e4e2"/><path d="M28 2l9 3-4 6zM52-2l8 5-8 5z" fill="#4d6a95"/><path d="M38 3l6-3 5 10zM20 0l5 9M62 0l6 8" fill="#999" stroke="#888"/><path d="M30 6l8 2-3 5z" fill="#4fb7d8"/><path d="M5 3q37 20 74 0L71 80q-2 8-29 8t-29-8z" fill="url(#gtr)"/><path d="M5 3q37 20 74 0" fill="none" stroke="#a9acae" stroke-width="1.500"/></svg></div>
</div>
<script>
/* Fits each label to its column width through letter spacing. */
document.fonts.ready.then(function(){
 document.querySelectorAll('[data-w]').forEach(function(el){
  var w=+el.dataset.w, n=el.textContent.length;
  el.style.letterSpacing=((w-el.getBoundingClientRect().width)/n)+'px';
  el.style.width=w+'px';
 });
});
</script>
</body>
</html>
